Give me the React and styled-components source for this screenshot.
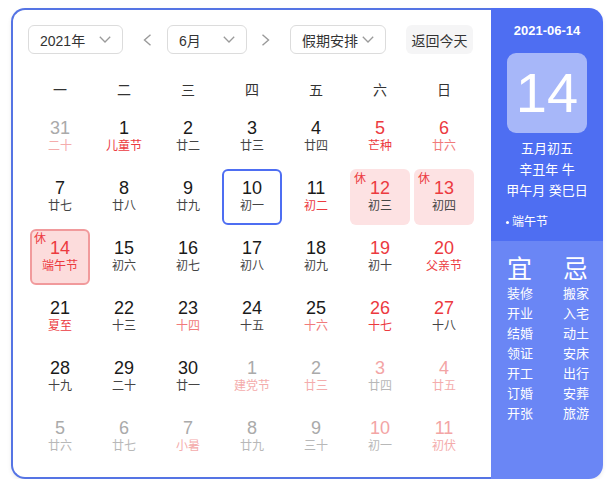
import React from 'react';
import styled, { createGlobalStyle } from 'styled-components';

const Global = createGlobalStyle`
  html, body { margin: 0; padding: 0; background: #fff; }
  body { font-family: "Liberation Sans", "Noto Sans CJK SC", sans-serif; }
`;

const RED = '#ec3a3f';
const NUM = { n: '#1a1a1a', r: RED, d: '#aaaaaa', dr: '#f3a5a5' };
const LUN = { n: '#444444', r: RED, s: '#f17a7a', d: '#b8b8b8', dr: '#f4acac' };

const Page = styled.div`
  padding: 8px 0 0 11px;
`;

const Calendar = styled.div`
  display: flex;
  width: 592px;
  height: 471px;
  border-radius: 14px;
  box-shadow: 0 2px 4px rgba(0, 0, 0, 0.08);
`;

const Main = styled.div`
  box-sizing: border-box;
  width: 480px;
  height: 100%;
  border: 2px solid #5574e4;
  border-right: none;
  border-radius: 14px 0 0 14px;
  padding: 15px 15px 10px 15px;
  background: #fff;
`;

const Toolbar = styled.div`
  display: flex;
  align-items: center;
  height: 29px;
`;

const Select = styled.div`
  box-sizing: border-box;
  width: ${(p) => p.$w}px;
  height: 29px;
  border: 1px solid #dcdcdc;
  border-radius: 6px;
  padding: 0 11px;
  display: flex;
  align-items: center;
  justify-content: space-between;
  font-size: 14px;
  color: #333;
`;

const NavArrow = styled.div`
  width: 20px;
  height: 29px;
  display: flex;
  align-items: center;
  justify-content: center;
  margin: 0 ${(p) => p.$mr}px 0 ${(p) => p.$ml}px;
`;

const TodayButton = styled.div`
  box-sizing: border-box;
  width: 67px;
  height: 29px;
  margin-left: 20px;
  border-radius: 6px;
  background: #f5f5f6;
  display: flex;
  align-items: center;
  justify-content: center;
  font-size: 14px;
  color: #333;
`;

const WeekHeader = styled.div`
  display: grid;
  grid-template-columns: repeat(7, 64px);
  height: 37px;
  margin-top: 16px;
  align-items: center;
  justify-items: center;
  font-size: 14px;
  color: #333;
`;

const Days = styled.div`
  display: grid;
  grid-template-columns: repeat(7, 64px);
  grid-auto-rows: 60px;
`;

const Cell = styled.div`
  position: relative;
  box-sizing: border-box;
  margin: 2px;
  height: 56px;
  border-radius: 6px;
  border: 2px solid
    ${(p) => (p.$sel ? '#4e6ef2' : p.$today ? '#f19a9c' : 'transparent')};
  background: ${(p) => (p.$today ? '#fcdcdc' : p.$rest ? '#fde2e3' : 'transparent')};
  display: flex;
  flex-direction: column;
  align-items: center;
  justify-content: center;
  padding-bottom: 3px;
`;

const Num = styled.div`
  font-size: 18px;
  line-height: 20px;
  color: ${(p) => NUM[p.$t]};
`;

const Lunar = styled.div`
  font-size: 12px;
  line-height: 16px;
  color: ${(p) => LUN[p.$t]};
`;

const RestTag = styled.span`
  position: absolute;
  top: 1px;
  left: 2px;
  font-size: 12px;
  line-height: 14px;
  color: ${RED};
`;

const Side = styled.div`
  width: 112px;
  height: 100%;
  border-radius: 0 14px 14px 0;
  overflow: hidden;
  display: flex;
  flex-direction: column;
  color: #fff;
`;

const SideTop = styled.div`
  background: #4e6ef2;
  padding: 14px 0 10px;
  display: flex;
  flex-direction: column;
  align-items: center;
`;

const DateText = styled.div`
  font-size: 13px;
  font-weight: bold;
  line-height: 18px;
`;

const BigDay = styled.div`
  width: 80px;
  height: 80px;
  margin-top: 13px;
  border-radius: 9px;
  background: rgba(255, 255, 255, 0.5);
  font-size: 56px;
  line-height: 80px;
  text-align: center;
`;

const LunarInfo = styled.div`
  margin-top: 5px;
  font-size: 13px;
  line-height: 21px;
  text-align: center;
`;

const Festival = styled.div`
  align-self: stretch;
  margin-top: 12px;
  padding-left: 15px;
  font-size: 12px;
  line-height: 18px;
  display: flex;
  align-items: center;
`;

const Dot = styled.span`
  width: 3px;
  height: 3px;
  border-radius: 50%;
  background: #fff;
  margin-right: 3px;
`;

const SideBottom = styled.div`
  flex: 1;
  background: #6a86f5;
  padding: 13px 0 0 16px;
  display: grid;
  grid-template-columns: 56px auto;
  align-content: start;
`;

const Column = styled.div`
  display: flex;
  flex-direction: column;
  align-items: flex-start;
`;

const BigLabel = styled.div`
  font-size: 25px;
  line-height: 30px;
`;

const Item = styled.div`
  font-size: 13px;
  line-height: 20px;
`;

const Chevron = ({ dir = 'down' }) => {
  if (dir === 'down')
    return (
      <svg width="12" height="7" viewBox="0 0 12 7">
        <polyline points="0.8,0.8 6,6 11.2,0.8" fill="none" stroke="#9a9a9a" strokeWidth="1.3" />
      </svg>
    );
  const pts = dir === 'left' ? '7.5,0.8 1.5,6 7.5,11.2' : '1.5,0.8 7.5,6 1.5,11.2';
  return (
    <svg width="9" height="12" viewBox="0 0 9 12">
      <polyline points={pts} fill="none" stroke="#9a9a9a" strokeWidth="1.4" />
    </svg>
  );
};

// [num, lunar, numTone, lunarTone, flags]
const days = [
  ['31', '二十', 'd', 'dr'], ['1', '儿童节', 'n', 'r'], ['2', '廿二', 'n', 'n'], ['3', '廿三', 'n', 'n'],
  ['4', '廿四', 'n', 'n'], ['5', '芒种', 'r', 'r'], ['6', '廿六', 'r', 's'],
  ['7', '廿七', 'n', 'n'], ['8', '廿八', 'n', 'n'], ['9', '廿九', 'n', 'n'], ['10', '初一', 'n', 'n', 'sel'],
  ['11', '初二', 'n', 'r'], ['12', '初三', 'r', 'n', 'rest'], ['13', '初四', 'r', 'n', 'rest'],
  ['14', '端午节', 'r', 'r', 'today'], ['15', '初六', 'n', 'n'], ['16', '初七', 'n', 'n'], ['17', '初八', 'n', 'n'],
  ['18', '初九', 'n', 'n'], ['19', '初十', 'r', 'n'], ['20', '父亲节', 'r', 'r'],
  ['21', '夏至', 'n', 'r'], ['22', '十三', 'n', 'n'], ['23', '十四', 'n', 's'], ['24', '十五', 'n', 'n'],
  ['25', '十六', 'n', 's'], ['26', '十七', 'r', 'r'], ['27', '十八', 'r', 'n'],
  ['28', '十九', 'n', 'n'], ['29', '二十', 'n', 'n'], ['30', '廿一', 'n', 'n'], ['1', '建党节', 'd', 'dr'],
  ['2', '廿三', 'd', 'dr'], ['3', '廿四', 'dr', 'd'], ['4', '廿五', 'dr', 'dr'],
  ['5', '廿六', 'd', 'd'], ['6', '廿七', 'd', 'd'], ['7', '小暑', 'd', 'dr'], ['8', '廿九', 'd', 'd'],
  ['9', '三十', 'd', 'd'], ['10', '初一', 'dr', 'd'], ['11', '初伏', 'dr', 'dr'],
];

const weekdays = ['一', '二', '三', '四', '五', '六', '日'];
const good = ['装修', '开业', '结婚', '领证', '开工', '订婚', '开张'];
const bad = ['搬家', '入宅', '动土', '安床', '出行', '安葬', '旅游'];

export default function App() {
  return (
    <Page>
      <Global />
      <Calendar>
        <Main>
          <Toolbar>
            <Select $w={95}>
              <span>2021年</span>
              <Chevron />
            </Select>
            <NavArrow $ml={14} $mr={10}>
              <Chevron dir="left" />
            </NavArrow>
            <Select $w={80}>
              <span>6月</span>
              <Chevron />
            </Select>
            <NavArrow $ml={8} $mr={15}>
              <Chevron dir="right" />
            </NavArrow>
            <Select $w={96}>
              <span>假期安排</span>
              <Chevron />
            </Select>
            <TodayButton>返回今天</TodayButton>
          </Toolbar>
          <WeekHeader>
            {weekdays.map((w) => (
              <span key={w}>{w}</span>
            ))}
          </WeekHeader>
          <Days>
            {days.map(([n, l, nt, lt, f], i) => (
              <Cell key={i} $sel={f === 'sel'} $rest={f === 'rest'} $today={f === 'today'}>
                {(f === 'rest' || f === 'today') && <RestTag>休</RestTag>}
                <Num $t={nt}>{n}</Num>
                <Lunar $t={lt}>{l}</Lunar>
              </Cell>
            ))}
          </Days>
        </Main>
        <Side>
          <SideTop>
            <DateText>2021-06-14</DateText>
            <BigDay>14</BigDay>
            <LunarInfo>
              <div>五月初五</div>
              <div>辛丑年 牛</div>
              <div>甲午月 癸巳日</div>
            </LunarInfo>
            <Festival>
              <Dot />
              端午节
            </Festival>
          </SideTop>
          <SideBottom>
            <Column>
              <BigLabel>宜</BigLabel>
              {good.map((g) => (
                <Item key={g}>{g}</Item>
              ))}
            </Column>
            <Column>
              <BigLabel>忌</BigLabel>
              {bad.map((g) => (
                <Item key={g}>{g}</Item>
              ))}
            </Column>
          </SideBottom>
        </Side>
      </Calendar>
    </Page>
  );
}
